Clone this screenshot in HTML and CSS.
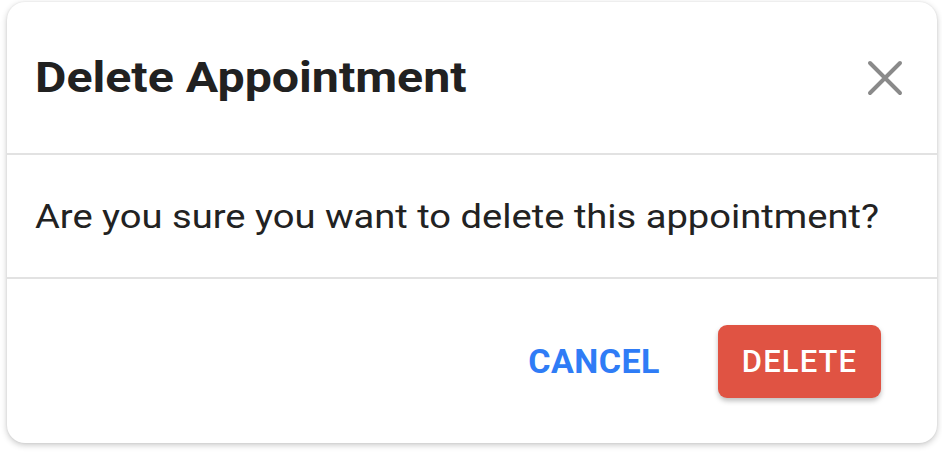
FILE: index.html
```html
<!DOCTYPE html>
<html>
<head>
<meta charset="utf-8">
<link rel="stylesheet" href="styles.css">
</head>
<body>
<div class="page">
  <div class="dialog">
    <div class="dialog-header">
      <h1 class="dialog-title">Delete Appointment</h1>
      <button class="close-btn" aria-label="close">
        <svg width="36" height="36" viewBox="0 0 36 36"><path d="M3 3 L33 33 M33 3 L3 33" stroke="#8a8a8a" stroke-width="4" stroke-linecap="round" fill="none"/></svg>
      </button>
    </div>
    <div class="dialog-body">
      <p class="dialog-text">Are you sure you want to delete this appointment?</p>
    </div>
    <div class="dialog-footer">
      <button class="btn btn-cancel">CANCEL</button>
      <button class="btn btn-delete">DELETE</button>
    </div>
  </div>
</div>
</body>
</html>
```
FILE: styles.css
```css
* { box-sizing: border-box; }
html, body { margin: 0; padding: 0; background: #fff; }
body { font-family: Roboto, "Liberation Sans", sans-serif; }
.page { width: 942px; height: 454px; padding: 2px 5px 11px 7px; display: flex; }
.dialog {
  flex: 1;
  background: #fff;
  border-radius: 18px;
  box-shadow: 0 2px 6px rgba(0,0,0,0.22), 0 0 2px rgba(0,0,0,0.08);
  display: flex;
  flex-direction: column;
  overflow: hidden;
}
.dialog-header {
  height: 153px;
  padding: 0 34px 0 28px;
  display: flex;
  align-items: center;
  justify-content: space-between;
  border-bottom: 2px solid #e2e2e2;
}
.dialog-title {
  margin: 0; font-size: 42px; font-weight: 700; color: #212121;
  transform: scaleX(1.15); transform-origin: left center;
}
.close-btn { background: none; border: 0; padding: 0; width: 36px; height: 36px; display: flex; }
.dialog-body {
  height: 124px;
  padding: 0 28px;
  display: flex;
  align-items: center;
  border-bottom: 2px solid #e2e2e2;
}
.dialog-text {
  margin: 0; font-size: 33px; color: #222;
  transform: scaleX(1.155); transform-origin: left center;
}
.dialog-footer {
  flex: 1;
  display: flex;
  align-items: center;
  justify-content: flex-end;
  padding: 0 56px 0 0;
  gap: 58px;
}
.btn { font-family: Roboto, "Liberation Sans", sans-serif; border: 0; cursor: pointer; }
.btn-cancel { background: none; padding: 0; color: #2f7cf6; font-size: 34px; font-weight: 700; letter-spacing: 0.5px; }
.btn-delete {
  width: 163px; height: 73px;
  background: #e05343; color: #fff;
  font-size: 31px; font-weight: 500;
  letter-spacing: 1.1px;
  border-radius: 9px;
  box-shadow: 0 3px 5px rgba(0,0,0,0.25);
}
```
